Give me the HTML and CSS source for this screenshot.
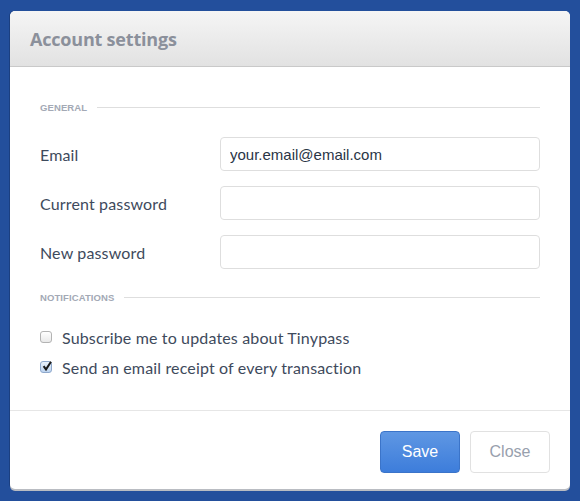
FILE: index.html
```html
<!DOCTYPE html>
<html>
<head>
<meta charset="utf-8">
<link rel="stylesheet" href="styles.css">
</head>
<body>
<div class="modal">
  <div class="modal-header"><h1 class="title">Account settings</h1></div>
  <div class="modal-body">
    <div class="section-title"><span>GENERAL</span><i class="rule"></i></div>
    <div class="row"><label class="label">Email</label><input class="field" type="text" value="your.email@email.com"></div>
    <div class="row"><label class="label">Current password</label><input class="field" type="password"></div>
    <div class="row"><label class="label">New password</label><input class="field" type="password"></div>
    <div class="section-title notif"><span>NOTIFICATIONS</span><i class="rule"></i></div>
    <div class="check-row first"><span class="box"></span><span class="check-label">Subscribe me to updates about Tinypass</span></div>
    <div class="check-row"><span class="box checked"><svg viewBox="0 0 12 12" width="12" height="12"><path d="M2.6 6.2 L5 9.4 L10 1.8" fill="none" stroke="#1a1a1a" stroke-width="2"/></svg></span><span class="check-label">Send an email receipt of every transaction</span></div>
  </div>
  <div class="modal-footer">
    <button class="btn btn-primary">Save</button>
    <button class="btn btn-default">Close</button>
  </div>
</div>
</body>
</html>
```
FILE: styles.css
```css
html, body { margin: 0; padding: 0; }
body {
  background: #234f9c;
  width: 580px;
  height: 501px;
  overflow: hidden;
  padding-top: 11px;
  box-sizing: border-box;
}
.modal {
  margin-left: 10px;
  width: 560px;
  height: 478px;
  background: #fff;
  border-radius: 5px;
  box-shadow: 0 2px 0 #b9bcc2, -1px 0 0 #1b3f80;
  display: flex;
  flex-direction: column;
  overflow: hidden;
}
.modal-header {
  height: 55px;
  border-bottom: 1px solid #c9c9c9;
  background: linear-gradient(#f5f5f5, #e2e2e2);
  display: flex;
  align-items: center;
  padding-left: 20px;
  border-radius: 5px 5px 0 0;
}
.title {
  margin: 0;
  font-family: "Open Sans", sans-serif;
  font-weight: 700;
  font-size: 18px;
  color: #8b909b;
  letter-spacing: -0.2px;
}
.modal-body {
  flex: 1;
  padding: 33px 30px 0 30px;
}
.section-title {
  display: flex;
  align-items: center;
  gap: 10px;
  height: 14px;
}
.section-title span {
  font-family: "Liberation Sans", Arial, sans-serif;
  font-weight: 700;
  font-size: 9.5px;
  color: #a3a9b5;
  letter-spacing: 0.1px;
}
.section-title .rule {
  flex: 1;
  height: 1px;
  background: #dedede;
}
.row {
  display: flex;
  align-items: center;
  height: 34px;
  margin-top: 15px;
}
.section-title + .row { margin-top: 23px; }
.label {
  width: 180px;
  font-family: "Lato", sans-serif;
  font-size: 16px;
  letter-spacing: 0.15px;
  color: #3e4a5c;
}
.field {
  width: 320px;
  height: 34px;
  box-sizing: border-box;
  border: 1px solid #dedede;
  border-radius: 4px;
  padding: 0 9px;
  font-family: "Liberation Sans", Arial, sans-serif;
  font-size: 15px;
  color: #2a3546;
  outline: none;
}
.section-title.notif { margin-top: 21px; }
.check-row {
  display: flex;
  align-items: center;
  height: 20px;
  margin-top: 10px;
}
.check-row.first { margin-top: 23px; }
.box {
  width: 12px;
  height: 12px;
  box-sizing: border-box;
  border: 1px solid #b3b3b3;
  border-radius: 3px;
  background: linear-gradient(#ffffff, #e9e9e9);
  margin-right: 10px;
  position: relative;
}
.box.checked {
  background: linear-gradient(#eaf2fb, #bcd3ef);
  border-color: #8ea8cc;
}
.box svg { position: absolute; left: 0; top: -2px; }
.check-label {
  font-family: "Lato", sans-serif;
  font-size: 16px;
  letter-spacing: 0.15px;
  color: #3e4a5c;
}
.modal-footer {
  height: 79px;
  border-top: 1px solid #e6e6e6;
  display: flex;
  justify-content: flex-end;
  align-items: flex-start;
  gap: 10px;
  padding: 20px 20px 0 0;
  box-sizing: border-box;
}
.btn {
  height: 42px;
  width: 80px;
  border-radius: 4px;
  font-family: "Liberation Sans", Arial, sans-serif;
  font-size: 16px;
  cursor: pointer;
}
.btn-primary {
  background: linear-gradient(#5f97e3, #3d7ddb);
  border: 1px solid #3b74c9;
  color: #fff;
}
.btn-default {
  background: #fff;
  border: 1px solid #e1e1e1;
  color: #98a0ad;
}
```
